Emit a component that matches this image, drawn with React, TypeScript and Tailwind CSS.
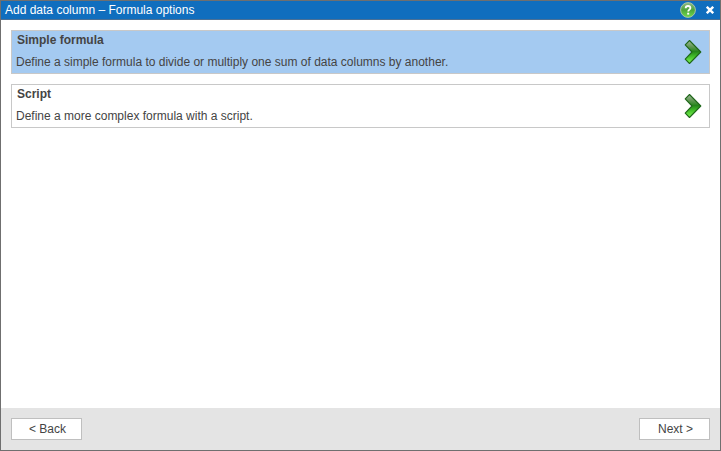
import clsx from "clsx";

const options = [
  {
    id: "simple",
    title: "Simple formula",
    description:
      "Define a simple formula to divide or multiply one sum of data columns by another.",
    active: true,
  },
  {
    id: "script",
    title: "Script",
    description: "Define a more complex formula with a script.",
    active: false,
  },
];

function HelpIcon() {
  return (
    <svg viewBox="0 0 16 16" className="size-4" aria-hidden="true">
      <defs>
        <linearGradient id="help-fill" x1="0" y1="0" x2="0" y2="1">
          <stop offset="0" stopColor="#8fb985" />
          <stop offset="0.5" stopColor="#4da63c" />
          <stop offset="1" stopColor="#72dc4b" />
        </linearGradient>
      </defs>
      <circle cx="8" cy="8" r="7.4" fill="url(#help-fill)" stroke="#a9c3a8" strokeWidth="1" />
      <path
        d="M5.7 6.2C5.7 4.7 6.6 4 8 4s2.4.8 2.4 2c0 1.6-2.2 1.7-2.2 3.5"
        fill="none"
        stroke="#fff"
        strokeWidth="1.8"
      />
      <rect x="7.2" y="10.7" width="2" height="1.9" fill="#fff" />
    </svg>
  );
}

function CloseIcon() {
  return (
    <svg viewBox="0 0 8 8" className="size-2" aria-hidden="true">
      <path d="M0.8 0.8L7.2 7.2M7.2 0.8L0.8 7.2" stroke="#fff" strokeWidth="2.4" />
    </svg>
  );
}

function ArrowIcon({ id }: { id: string }) {
  return (
    <svg viewBox="0 0 18 26" className="h-[26px] w-[18px] shrink-0" aria-hidden="true">
      <defs>
        <linearGradient id={id} x1="0" y1="0" x2="0" y2="1">
          <stop offset="0" stopColor="#a1b79c" />
          <stop offset="0.25" stopColor="#659958" />
          <stop offset="0.48" stopColor="#25851a" />
          <stop offset="0.7" stopColor="#43c02a" />
          <stop offset="1" stopColor="#82f657" />
        </linearGradient>
      </defs>
      <path
        d="M5.5 1.5L16.8 13L5.5 24.5L1.2 20.2L8 13L1.2 5.8Z"
        fill={`url(#${id})`}
        stroke="#1f671a"
        strokeWidth="1.1"
        strokeLinejoin="round"
      />
    </svg>
  );
}

export default function App() {
  return (
    <div className="flex min-h-screen flex-col border border-[#6f6f6f] bg-white font-['Liberation_Sans',Arial,sans-serif] text-xs text-[#444444]">
      {/* Title bar */}
      <header className="flex h-[19px] items-center justify-between border-b border-[#4b7095] bg-[#106ebe] pr-1.5 pl-1 text-white">
        <h1>Add data column – Formula options</h1>
        <div className="flex items-center gap-2.5">
          <button type="button" aria-label="Help">
            <HelpIcon />
          </button>
          <button type="button" aria-label="Close">
            <CloseIcon />
          </button>
        </div>
      </header>

      {/* Formula types */}
      <main className="flex flex-1 flex-col gap-2.5 p-2.5">
        {options.map((option) => (
          <button
            key={option.id}
            type="button"
            className={clsx(
              "flex h-11 items-center justify-between border border-[#c8c8c8] pr-[7px] pl-1 text-left",
              option.active ? "bg-[#a4caf1]" : "bg-white"
            )}
          >
            <span className="flex flex-col gap-1.5 pb-0.5">
              <span className="pl-px font-bold">{option.title}</span>
              <span>{option.description}</span>
            </span>
            <ArrowIcon id={`arrow-${option.id}`} />
          </button>
        ))}
      </main>

      {/* Wizard navigation */}
      <footer className="flex justify-between bg-[#e4e4e4] p-2.5">
        <button type="button" className="h-[22px] w-[71px] border border-[#bfbfbf] bg-white pl-0.5">
          &lt; Back
        </button>
        <button type="button" className="h-[22px] w-[71px] border border-[#bfbfbf] bg-white pl-0.5">
          Next &gt;
        </button>
      </footer>
    </div>
  );
}
